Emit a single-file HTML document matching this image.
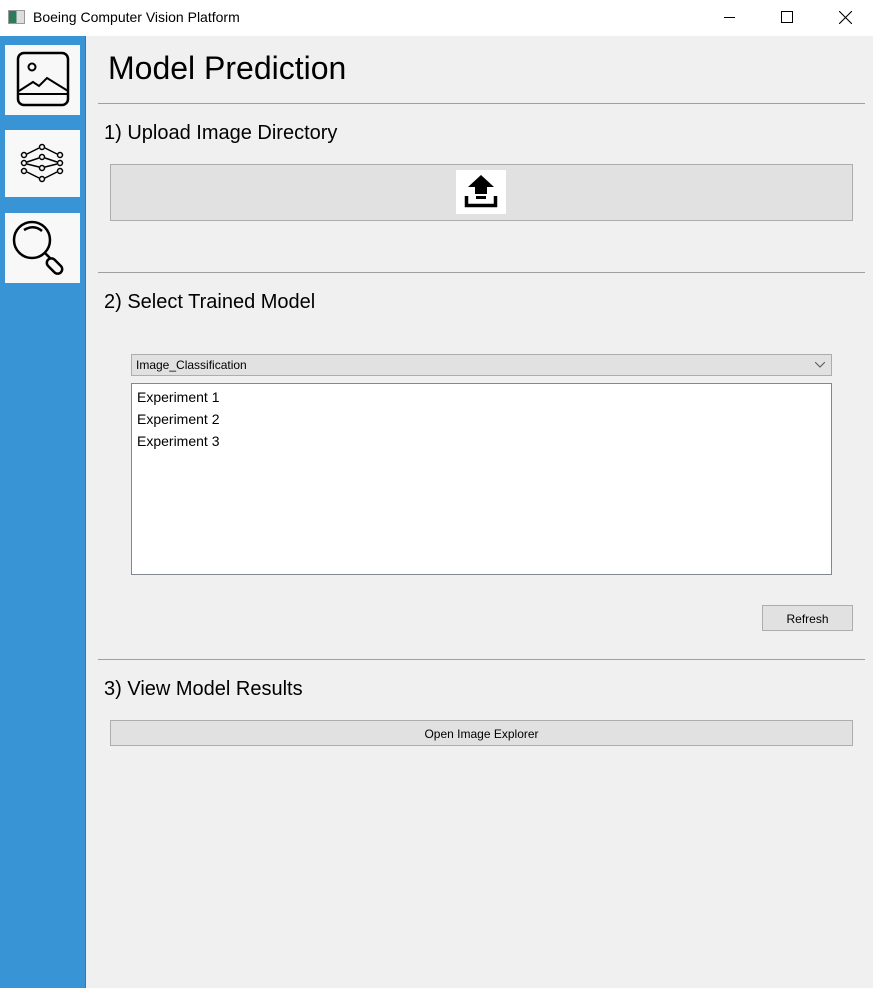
<!DOCTYPE html>
<html><head><meta charset="utf-8"><style>
*{box-sizing:border-box;margin:0;padding:0}
body{width:873px;height:988px;background:#f0f0f0;font-family:"Liberation Sans","DejaVu Sans",sans-serif;position:relative;overflow:hidden;color:#000}
.abs{position:absolute}
.title{left:0;top:0;width:873px;height:36px;background:#fff}
.side{left:0;top:36px;width:86px;height:952px;background:#3894d4;border-right:1px solid #2a7bb5}
.sb{left:5px;width:75px;background:#f8f8f8}
.hr{left:98px;width:767px;height:1px;background:#a0a0a0}
h2{position:absolute;font-weight:normal;font-size:20px;left:104px}
.btn{background:#e1e1e1;border:1px solid #adadad;font-size:12px;text-align:center}
</style></head><body>
<div class="abs title">
  <div class="abs" style="left:8px;top:10px;width:17px;height:14px;border:1px solid #999;background:linear-gradient(90deg,#2f7a5a 0 50%,#ddd 50%)"></div>
  <div class="abs" style="left:33px;top:9px;font-size:14px">Boeing Computer Vision Platform</div>
  <div class="abs" style="left:724px;top:17px;width:11px;height:1px;background:#000"></div>
  <div class="abs" style="left:781px;top:11px;width:12px;height:12px;border:1px solid #000"></div>
  <svg class="abs" style="left:839px;top:11px" width="13" height="13"><path d="M0 0L13 13M13 0L0 13" stroke="#000" stroke-width="1.1"/></svg>
</div>
<div class="abs side"></div>
<div class="abs sb" style="top:45px;height:70px">
  <svg width="75" height="70"><rect x="13" y="8" width="50" height="52" rx="6" fill="none" stroke="#000" stroke-width="2.5"/><circle cx="27" cy="22" r="3.5" fill="none" stroke="#000" stroke-width="2"/><path d="M14 46L28 37L34 41L42 33L63 46M14 49H63" fill="none" stroke="#000" stroke-width="2"/></svg>
</div>
<div class="abs sb" style="top:130px;height:67px">
  <svg width="75" height="67" fill="none" stroke="#000" stroke-width="1.5"><circle cx="19" cy="25" r="2.5"/><circle cx="19" cy="33" r="2.5"/><circle cx="19" cy="41" r="2.5"/><circle cx="37" cy="17" r="2.5"/><circle cx="37" cy="27" r="2.5"/><circle cx="37" cy="38" r="2.5"/><circle cx="37" cy="49" r="2.5"/><circle cx="55" cy="25" r="2.5"/><circle cx="55" cy="33" r="2.5"/><circle cx="55" cy="41" r="2.5"/><path d="M22 24L34 18M40 18L52 24M22 32L34 28M40 28L52 32M22 34L34 37M40 37L52 34M22 42L34 48M40 48L52 42"/></svg>
</div>
<div class="abs sb" style="top:213px;height:70px">
  <svg width="75" height="70" fill="none" stroke="#000" stroke-width="2.5"><circle cx="27" cy="27" r="18"/><path d="M19 17Q29 11 37 18"/><path d="M40 40L46 46"/><rect x="45" y="44" width="9" height="18" rx="4.5" transform="rotate(-45 49.5 53)"/></svg>
</div>
<div class="abs" style="left:108px;top:50px;font-size:32px">Model Prediction</div>
<div class="abs hr" style="top:103px"></div>
<h2 style="top:122px">1) Upload Image Directory</h2>
<div class="abs btn" style="left:110px;top:164px;width:743px;height:57px"></div>
<div class="abs" style="left:456px;top:170px;width:50px;height:44px;background:#fff">
  <svg width="50" height="44"><path d="M25 5L38 17H31V24H19V17H12Z M20 26H30V29H20Z" fill="#000"/><path d="M10.5 26V35.5H39.5V26" fill="none" stroke="#000" stroke-width="3.5"/></svg>
</div>
<div class="abs hr" style="top:272px"></div>
<h2 style="top:291px">2) Select Trained Model</h2>
<div class="abs btn" style="left:131px;top:354px;width:701px;height:22px;text-align:left;padding:3px 0 0 4px">Image_Classification
  <svg class="abs" style="right:6px;top:7px" width="10" height="6"><path d="M0 0L5 5L10 0" fill="none" stroke="#555"/></svg></div>
<div class="abs" style="left:131px;top:383px;width:701px;height:192px;background:#fff;border:1px solid #828790;font-size:14px;line-height:22px;padding:2px 0 0 5px">Experiment 1<br>Experiment 2<br>Experiment 3</div>
<div class="abs btn" style="left:762px;top:605px;width:91px;height:26px;padding-top:6px">Refresh</div>
<div class="abs hr" style="top:659px"></div>
<h2 style="top:678px">3) View Model Results</h2>
<div class="abs btn" style="left:110px;top:720px;width:743px;height:26px;padding-top:6px">Open Image Explorer</div>
</body></html>
